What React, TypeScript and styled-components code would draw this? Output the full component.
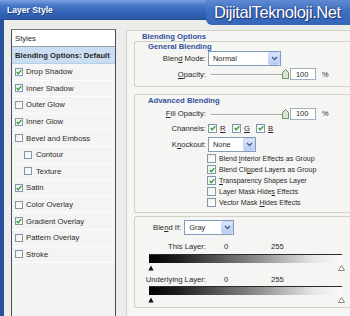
import React from 'react';
import styled, { createGlobalStyle } from 'styled-components';

const GlobalStyle = createGlobalStyle`
  html, body {
    margin: 0;
    padding: 0;
    background: #ececea;
  }
  body {
    font-family: "Liberation Sans", Arial, sans-serif;
  }
`;

const Dialog = styled.div`
  position: relative;
  width: 350px;
  height: 316px;
  overflow: hidden;
  display: flex;
  flex-direction: column;
  background: #ececea;
  color: #2a2a2a;
  font-family: "Liberation Sans", Arial, sans-serif;
  font-size: 7.7px;
`;

const TitleBar = styled.div`
  flex: none;
  height: 20px;
  box-sizing: border-box;
  padding-left: 7px;
  display: flex;
  align-items: center;
  background: linear-gradient(to bottom, #7aa2e0 0%, #4675c6 30%, #3163b6 70%, #2b5aa8 100%);
  border-bottom: 1px solid #284d8e;
  color: #fff;
  font-weight: bold;
  font-size: 8.6px;
  text-shadow: 1px 1px 0 #1d3f80;
`;

const Watermark = styled.div`
  position: absolute;
  top: 0;
  right: 0;
  width: 144px;
  height: 25px;
  box-sizing: border-box;
  padding-left: 8px;
  display: flex;
  align-items: center;
  background: linear-gradient(to bottom, #5f8ad2 0%, #3f6fc2 45%, #3566b8 100%);
  border-bottom-left-radius: 6px;
  color: #fff;
  font-size: 16.5px;
  letter-spacing: -0.4px;
  text-shadow: 0 0 2px #1d3a78, 1px 1px 1px #1d3a78;
`;

const Body = styled.div`
  flex: 1;
  display: flex;
  align-items: flex-start;
  gap: 10px;
  padding: 9px 0 0 7px;
  border-left: 4px solid #2a529c;
`;

const StyleList = styled.div`
  flex: none;
  width: 105px;
  height: 300px;
  box-sizing: border-box;
  border: 1px solid #4c4c4c;
  border-top-color: #777;
  background: #f3f3f3;
  display: flex;
  flex-direction: column;
`;

const ListHeader = styled.div`
  height: 17px;
  box-sizing: border-box;
  padding-left: 3px;
  display: flex;
  align-items: center;
  background: #fff;
  border-bottom: 1px solid #9c9c9c;
`;

const ListRow = styled.div<{ $active?: boolean; $indent?: boolean }>`
  height: ${(p) => (p.$active ? '17px' : '16.6px')};
  box-sizing: border-box;
  padding-left: ${(p) => (p.$indent ? '12px' : '3px')};
  display: flex;
  align-items: center;
  gap: ${(p) => (p.$indent ? '4px' : '3px')};
  background: ${(p) => (p.$active ? '#c9ddf3' : '#f4f4f4')};
  border-bottom: 1px solid ${(p) => (p.$active ? '#b9cde4' : '#fdfdfd')};
  font-weight: ${(p) => (p.$active ? 'bold' : 'normal')};
  color: #2b2b2b;
`;

const Box = styled.span<{ $size?: number }>`
  flex: none;
  width: ${(p) => p.$size || 8}px;
  height: ${(p) => p.$size || 8}px;
  box-sizing: border-box;
  border: 1px solid #8298ac;
  background: linear-gradient(135deg, #f0f0ea, #fff);
  display: flex;
  align-items: center;
  justify-content: center;
`;

const RightPanel = styled.div`
  flex: 1;
  height: 300px;
  margin-top: 1px;
  padding-top: 1px;
  border-top: 1px solid #d4d3c6;
  border-left: 1px solid #d4d3c6;
  background: #f5f5f3;
  display: flex;
  flex-direction: column;
`;

const PanelTitle = styled.div`
  height: 9px;
  line-height: 9px;
  padding-left: 15px;
  font-weight: bold;
  color: #33529c;
`;

const Group = styled.div<{ $top: number }>`
  margin: ${(p) => p.$top}px 0 0 7px;
  padding-bottom: 4px;
  border: 1px solid #d3d2c6;
  border-right: none;
  border-radius: 3px 0 0 3px;
  display: flex;
  flex-direction: column;
`;

const Legend = styled.div<{ $h: number }>`
  height: ${(p) => p.$h}px;
  line-height: ${(p) => p.$h}px;
  padding-left: 13px;
  font-weight: bold;
  color: #33529c;
`;

const Row = styled.div<{ $h: number }>`
  height: ${(p) => p.$h}px;
  display: flex;
  align-items: center;
`;

const Label = styled.span`
  flex: none;
  width: 71px;
  text-align: right;
  margin-right: 2px;
`;

const U = styled.span`
  text-decoration: underline;
`;

const Select = styled.div<{ $w: number }>`
  width: ${(p) => p.$w}px;
  height: 15px;
  box-sizing: border-box;
  border: 1px solid #7f9db9;
  background: #fff;
  display: flex;
  align-items: stretch;
  font-size: 7.4px;
`;

const SelectText = styled.span`
  flex: 1;
  padding-left: 4px;
  display: flex;
  align-items: center;
`;

const DropButton = styled.span`
  flex: none;
  width: 12px;
  box-sizing: border-box;
  border: 1px solid #c3d3fb;
  border-radius: 2px;
  background: linear-gradient(to bottom, #dde7fc, #b6cbf4);
  display: flex;
  align-items: center;
  justify-content: center;
`;

const Slider = styled.div`
  position: relative;
  width: 80px;
  height: 12px;
  margin-left: 1px;
`;

const Track = styled.div`
  position: absolute;
  left: 2px;
  right: 2px;
  top: 6px;
  height: 1px;
  background: #a9a9a4;
  border-bottom: 1px solid #fff;
`;

const Thumb = styled.svg`
  position: absolute;
  right: 0;
  top: 1px;
`;

const NumberInput = styled.div`
  width: 26px;
  height: 12px;
  margin-left: 1px;
  box-sizing: border-box;
  border: 1px solid #9fb0c1;
  background: #fff;
  padding-left: 5px;
  display: flex;
  align-items: center;
  font-size: 7.4px;
`;

const Percent = styled.span`
  margin-left: 6px;
  font-size: 7.4px;
`;

const Channel = styled.span`
  width: 24px;
  display: flex;
  align-items: center;
  gap: 3px;
`;

const CheckLine = styled.div`
  height: 11px;
  padding-left: 72px;
  display: flex;
  align-items: center;
  gap: 3px;
  font-size: 7px;
`;

const BlendLabel = styled.span`
  margin: 0 3px 0 18px;
`;

const ValueRow = styled.div<{ $top: number }>`
  height: 12px;
  margin-top: ${(p) => p.$top}px;
  display: flex;
  align-items: center;
`;

const Value = styled.span<{ $w: number }>`
  width: ${(p) => p.$w}px;
`;

const GradientBar = styled.div<{ $top: number }>`
  width: 193px;
  height: 9px;
  margin: ${(p) => p.$top}px 0 0 14px;
  background: linear-gradient(to right, #000 0%, #1e1e1e 15%, #8a8a8a 55%, #e6e6e6 85%, #fafafa 100%);
  border-top: 1px solid #2b2b2b;
  box-sizing: border-box;
`;

const Markers = styled.div`
  width: 197px;
  height: 8px;
  margin-left: 13px;
  display: flex;
  justify-content: space-between;
  align-items: flex-end;
`;

const Check = () => (
  <svg width="6" height="6" viewBox="0 0 6 6">
    <path d="M0.7 3 L2.3 4.7 L5.3 1.1" fill="none" stroke="#2a9a3a" strokeWidth="1.3" />
  </svg>
);

const CheckBox = ({ on, size }: { on?: boolean; size?: number }) => (
  <Box $size={size}>{on && <Check />}</Box>
);

const Chevron = () => (
  <svg width="7" height="5" viewBox="0 0 7 5">
    <path d="M1 1 L3.5 3.5 L6 1" fill="none" stroke="#4d6185" strokeWidth="1.4" />
  </svg>
);

const SliderControl = () => (
  <Slider>
    <Track />
    <Thumb width="7" height="10" viewBox="0 0 7 10">
      <path d="M0.5 3.5 L3.5 0.5 L6.5 3.5 V9.5 H0.5 Z" fill="#d6e8cf" stroke="#6f8f6a" />
    </Thumb>
  </Slider>
);

const DarkMarker = () => (
  <svg width="6" height="6" viewBox="0 0 6 6">
    <path d="M3 0.5 L5.6 5.5 H0.4 Z" fill="#111" />
  </svg>
);

const LightMarker = () => (
  <svg width="7" height="6" viewBox="0 0 7 6">
    <path d="M3.5 0.5 L6.5 5.5 H0.5 Z" fill="#fff" stroke="#888" />
  </svg>
);

const styleItems: { name: string; on?: boolean; indent?: boolean }[] = [
  { name: 'Drop Shadow', on: true },
  { name: 'Inner Shadow', on: true },
  { name: 'Outer Glow' },
  { name: 'Inner Glow', on: true },
  { name: 'Bevel and Emboss' },
  { name: 'Contour', indent: true },
  { name: 'Texture', indent: true },
  { name: 'Satin', on: true },
  { name: 'Color Overlay' },
  { name: 'Gradient Overlay', on: true },
  { name: 'Pattern Overlay' },
  { name: 'Stroke' },
];

export default function App() {
  return (
    <Dialog>
      <GlobalStyle />
      <TitleBar>Layer Style</TitleBar>
      <Watermark>DijitalTeknoloji.Net</Watermark>
      <Body>
        <StyleList>
          <ListHeader>Styles</ListHeader>
          <ListRow $active>Blending Options: Default</ListRow>
          {styleItems.map((item) => (
            <ListRow key={item.name} $indent={item.indent}>
              <CheckBox on={item.on} />
              {item.name}
            </ListRow>
          ))}
        </StyleList>

        <RightPanel>
          <PanelTitle>Blending Options</PanelTitle>
          <Group $top={0}>
            <Legend $h={9}>General Blending</Legend>
            <Row $h={15}>
              <Label>
                Blen<U>d</U> Mode:
              </Label>
              <Select $w={73}>
                <SelectText>Normal</SelectText>
                <DropButton>
                  <Chevron />
                </DropButton>
              </Select>
            </Row>
            <Row $h={16}>
              <Label>
                <U>O</U>pacity:
              </Label>
              <SliderControl />
              <NumberInput>100</NumberInput>
              <Percent>%</Percent>
            </Row>
          </Group>

          <Group $top={7}>
            <Legend $h={11}>Advanced Blending</Legend>
            <Row $h={15}>
              <Label>
                <U>F</U>ill Opacity:
              </Label>
              <SliderControl />
              <NumberInput>100</NumberInput>
              <Percent>%</Percent>
            </Row>
            <Row $h={14}>
              <Label>Channels:</Label>
              <Channel>
                <CheckBox on size={9} />
                <U>R</U>
              </Channel>
              <Channel>
                <CheckBox on size={9} />
                <U>G</U>
              </Channel>
              <Channel>
                <CheckBox on size={9} />
                <U>B</U>
              </Channel>
            </Row>
            <Row $h={18}>
              <Label>
                K<U>n</U>ockout:
              </Label>
              <Select $w={48}>
                <SelectText>None</SelectText>
                <DropButton>
                  <Chevron />
                </DropButton>
              </Select>
            </Row>
            <CheckLine>
              <CheckBox size={9} />
              <span>
                Blend <U>I</U>nterior Effects as Group
              </span>
            </CheckLine>
            <CheckLine>
              <CheckBox on size={9} />
              <span>
                Blend Cli<U>p</U>ped Layers as Group
              </span>
            </CheckLine>
            <CheckLine>
              <CheckBox on size={9} />
              <span>
                <U>T</U>ransparency Shapes Layer
              </span>
            </CheckLine>
            <CheckLine>
              <CheckBox size={9} />
              <span>
                Layer Mask Hide<U>s</U> Effects
              </span>
            </CheckLine>
            <CheckLine>
              <CheckBox size={9} />
              <span>
                Vector Mask <U>H</U>ides Effects
              </span>
            </CheckLine>
          </Group>

          <Group $top={3}>
            <Row $h={20}>
              <BlendLabel>
                Ble<U>n</U>d If:
              </BlendLabel>
              <Select $w={50}>
                <SelectText>Gray</SelectText>
                <DropButton>
                  <Chevron />
                </DropButton>
              </Select>
            </Row>
            <ValueRow $top={3}>
              <Label>This Layer:</Label>
              <Value $w={16} />
              <Value $w={47}>0</Value>
              <Value $w={20}>255</Value>
            </ValueRow>
            <GradientBar $top={2} />
            <Markers>
              <DarkMarker />
              <LightMarker />
            </Markers>
            <ValueRow $top={2}>
              <Label>Underlying Layer:</Label>
              <Value $w={16} />
              <Value $w={47}>0</Value>
              <Value $w={20}>255</Value>
            </ValueRow>
            <GradientBar $top={1} />
            <Markers>
              <DarkMarker />
              <LightMarker />
            </Markers>
          </Group>
        </RightPanel>
      </Body>
    </Dialog>
  );
}
